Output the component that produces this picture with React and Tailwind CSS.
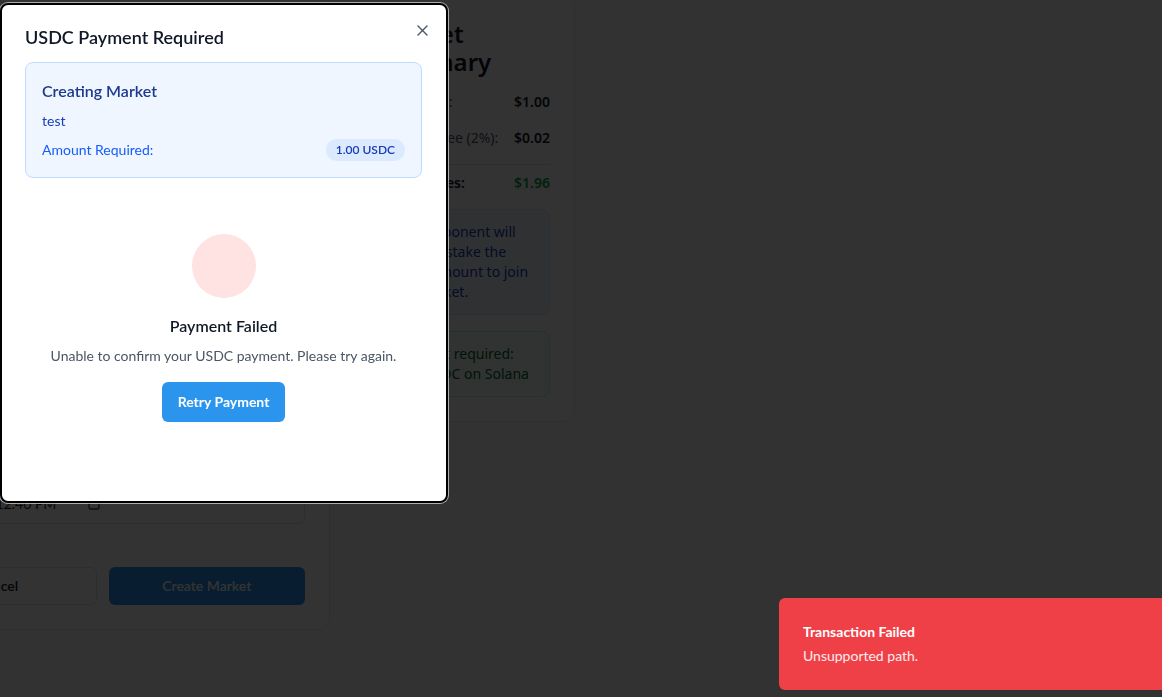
import React from "react";

function XIcon() {
  return (
    <svg width="11" height="11" viewBox="0 0 11 11" fill="none" stroke="currentColor" strokeWidth="1.4" strokeLinecap="round">
      <path d="M1 1 L10 10 M10 1 L1 10" />
    </svg>
  );
}

function CalendarIcon() {
  return (
    <svg width="12" height="12" viewBox="0 0 12 12" fill="none" stroke="currentColor" strokeWidth="1.3">
      <rect x="1" y="1.5" width="10" height="9.5" rx="1.5" />
    </svg>
  );
}

export default function App() {
  return (
    <div className="relative h-[697px] w-[1162px] overflow-hidden bg-gray-50 font-['Lato',sans-serif] text-gray-900">
      {/* Underlying page */}
      <div className="-ml-[127px] -mt-[5px] flex items-start gap-6">
        {/* Left form card */}
        <div className="flex h-[635px] w-[457px] flex-col justify-end rounded-xl border border-gray-200 bg-white p-6">
          <div className="flex h-[40px] items-center gap-2 rounded-md border border-gray-200 px-3 text-sm text-gray-900">
            <span>12/31/2025, 12:40 PM</span>
            <span className="ml-6 text-gray-700">
              <CalendarIcon />
            </span>
          </div>
          <div className="mt-[43px] flex gap-3">
            <button className="h-[38px] flex-1 rounded-md border border-gray-200 bg-white text-sm font-semibold text-gray-900">
              Cancel
            </button>
            <button className="h-[38px] flex-1 rounded-md bg-[#2b95ed] text-sm font-semibold text-white">
              Create Market
            </button>
          </div>
        </div>

        {/* Right summary card */}
        <div className="w-[221px] rounded-xl border border-gray-200 bg-white p-6 font-['Noto_Sans',sans-serif]">
          <h2 className="text-2xl font-semibold leading-7 text-gray-900">Market Summary</h2>
          <div className="mt-4 space-y-4 text-sm leading-5">
            <div className="flex justify-between">
              <span className="text-gray-600">Your Stake:</span>
              <span className="font-semibold text-gray-900">$1.00</span>
            </div>
            <div className="flex justify-between">
              <span className="text-gray-600">Platform Fee (2%):</span>
              <span className="font-semibold text-gray-900">$0.02</span>
            </div>
          </div>
          <div className="mt-4 border-t border-gray-200 pt-2 text-sm leading-5">
            <div className="flex justify-between">
              <span className="font-semibold text-gray-900">Total Stakes:</span>
              <span className="font-semibold text-green-600">$1.96</span>
            </div>
          </div>
          <div className="mt-4 rounded-lg border border-blue-100 bg-blue-50 p-3 text-sm leading-5 text-blue-800">
            Your opponent will need to stake the same amount to join the market.
          </div>
          <div className="mt-4 rounded-lg border border-green-200 bg-green-50 p-3 text-sm leading-5 text-green-800">
            Payment required: 1.00 USDC on Solana
          </div>
        </div>
      </div>

      {/* Overlay */}
      <div className="fixed inset-0 bg-black/80" />

      {/* Modal */}
      <div className="fixed left-0 top-[3px] h-[500px] w-[448px] rounded-lg border-2 border-black bg-white pl-[23px] pr-6 pt-5 shadow-[0_0_0_1px_rgba(255,255,255,0.6)]">
        <button className="absolute right-[18px] top-[20px] text-gray-600">
          <XIcon />
        </button>
        <h2 className="text-lg font-semibold leading-6 text-gray-900">USDC Payment Required</h2>
        <div className="mt-[13px] rounded-lg border border-blue-200 bg-blue-50 p-4">
          <div className="text-base font-semibold leading-6 text-blue-900">Creating Market</div>
          <div className="mt-2 text-sm leading-5 text-blue-800">test</div>
          <div className="mt-2 flex h-[22px] items-center justify-between">
            <span className="text-sm text-blue-600">Amount Required:</span>
            <span className="flex h-[22px] items-center rounded-full bg-blue-100 px-2.5 text-xs font-semibold text-blue-800">
              1.00 USDC
            </span>
          </div>
        </div>
        <div className="flex flex-col items-center">
          <div className="mt-14 h-16 w-16 rounded-full bg-red-100" />
          <div className="mt-4 text-base font-semibold leading-6 text-gray-900">Payment Failed</div>
          <p className="mt-2 text-sm leading-5 text-gray-600">
            Unable to confirm your USDC payment. Please try again.
          </p>
          <button className="mt-4 h-10 rounded-md bg-[#2b95ed] px-4 text-sm font-bold text-white">
            Retry Payment
          </button>
        </div>
      </div>

      {/* Toast */}
      <div className="fixed left-[779px] top-[598px] w-[420px] rounded-md bg-[#ef4048] p-6 text-white">
        <div className="text-sm font-bold leading-5">Transaction Failed</div>
        <div className="mt-1 text-sm leading-5 text-white/90">Unsupported path.</div>
      </div>
    </div>
  );
}
